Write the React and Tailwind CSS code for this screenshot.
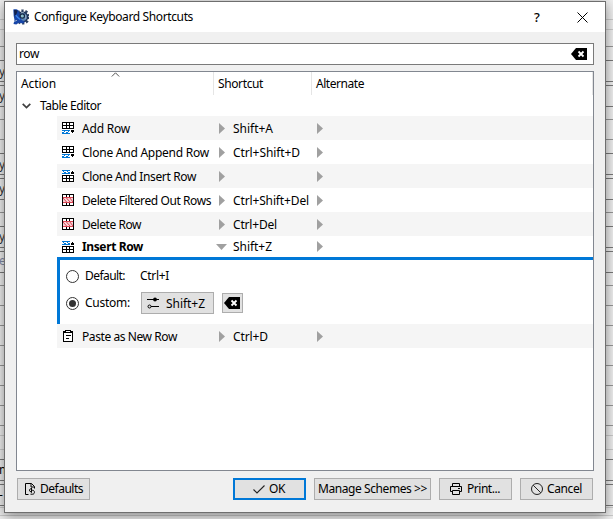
import { useLayoutEffect, useRef } from 'react';

// Text set to a given advance width, by spreading the difference over its letters.
function T({ w, children, className = '' }) {
  const ref = useRef(null);
  useLayoutEffect(() => {
    const el = ref.current;
    el.style.letterSpacing = '0px';
    const natural = el.getBoundingClientRect().width;
    el.style.letterSpacing = `${(w - natural) / children.length}px`;
  }, [w, children]);
  return (
    <span ref={ref} className={`inline-block shrink-0 whitespace-pre ${className}`}>
      {children}
    </span>
  );
}

const BACK_LINES = [
  [19, 0], [29, 0], [46, 1], [60, 2], [81, 2], [85, 2], [106, 2], [119, 1], [139, 1],
  [153, 2], [174, 2], [178, 2], [199, 2], [212, 1], [226, 2], [247, 2], [251, 2], [272, 2],
  [285, 1], [305, 1], [325, 1], [345, 1], [365, 1], [385, 1], [405, 1], [425, 1], [435, 0],
  [449, 0], [459, 2], [480, 2], [484, 2], [505, 2], [507, 0], [515, 0],
];
const LINE_COLORS = ['bg-[#cccccc]', 'bg-[#989898]', 'bg-[#7a7a7a]'];
const BACK_TEXT = [
  [64, 'y', 'text-[#333]'], [88, 'y(', 'text-[#333]'], [157, 'y', 'text-[#333]'], [181, 'y', 'text-[#333]'],
  [229, 'y(', 'text-[#333]'], [253, 'er', 'text-[#7f8aa5]'], [462, 'm', 'text-black'], [487, '-', 'text-black'],
];

function Backdrop() {
  return (
    <div className="absolute inset-0 bg-[#f0f0f0]">
      {BACK_LINES.map(([y, tone]) => (
        <div key={y} className={`absolute inset-x-0 h-px ${LINE_COLORS[tone]}`} style={{ top: y }} />
      ))}
      {BACK_TEXT.map(([y, text, color]) => (
        <span key={y} className={`absolute -left-px text-[12px] leading-4 ${color}`} style={{ top: y }}>
          {text}
        </span>
      ))}
    </div>
  );
}

function AppIcon() {
  return (
    <svg className="h-4 w-4 shrink-0" viewBox="0 0 16 16">
      <circle cx="9.6" cy="8" r="6.3" fill="none" stroke="#2c405f" strokeWidth="2.600" strokeDasharray="2.200 1.760" />
      <circle cx="9.6" cy="8" r="4.900" fill="#5c86b4" stroke="#1e3358" strokeWidth="1.600" />
      <path d="M.3.5c2-.7 4-.3 5.200.9L7 5.500l1.500 5.500 3.500 1.800-2 1.600-4.200-.6-2.500 1.700L.5 15l1-4-.8-4z" fill="#1746a8" />
      <path d="M1 1.200c1.500-.6 2.700-.3 3.600.6L3.500 5 1.600 7.500z" fill="#14224a" />
      <path d="M2.800 6.200c1.200 2 2.500 3 4.500 4.300" stroke="#3d85ea" strokeWidth="1.300" fill="none" />
      <circle cx="9.300" cy="7" r="2.200" fill="#8cc0cd" stroke="#152744" strokeWidth="1.200" />
      <path d="M1 12.500l3-1.200M8 3.700l3-.5M12.800 6v4" stroke="#a3b8cc" strokeWidth=".9" />
    </svg>
  );
}

function AddIcon() {
  return (
    <svg className="h-3 w-3 shrink-0" viewBox="0 0 12 12" shapeRendering="crispEdges">
      <path d="M0 0h12v12H0z" fill="#fff" />
      <path d="M0 0h12v1H0zM0 3h12v1H0zM0 6h12v1H0zM0 0h1v7H0zM4 0h1v7H4zM7 0h1v7H7zM11 0h1v7h-1z" fill="#000" />
      <path d="M0 8h8v1H0zM2 9h1v1H2zM6 9h1v1H6zM0 10h2v1H0zM4 10h2v1H4zM0 11h8v1H0z" fill="#0078d7" />
      <path d="M9 8h3v2H9zM10 10h1v1h-1z" fill="#000" />
    </svg>
  );
}

function InsertIcon() {
  return (
    <svg className="h-3 w-3 shrink-0" viewBox="0 0 12 12" shapeRendering="crispEdges">
      <path d="M0 0h12v12H0z" fill="#fff" />
      <path d="M0 0h8v1H0zM1 1h1v1H1zM5 1h1v1H5zM2 2h2v1H2zM6 2h2v1H6zM0 3h8v1H0z" fill="#0078d7" />
      <path d="M10 1h1v1h-1zM9 2h3v2H9zM0 5h12v1H0zM0 8h12v1H0zM0 11h12v1H0zM0 5h1v7H0zM4 5h1v7H4zM7 5h1v7H7zM11 5h1v7h-1z" fill="#000" />
    </svg>
  );
}

function DeleteIcon() {
  return (
    <svg className="h-3 w-3 shrink-0" viewBox="0 0 12 12">
      <g shapeRendering="crispEdges">
        <path d="M0 0h12v12H0z" fill="#fff" />
        <path d="M0 0h12v1H0zM0 11h12v1H0zM0 0h1v12H0zM11 0h1v12h-1zM4 0h1v12H4zM7 0h1v12H7z" fill="#000" />
        <path d="M1 3h10v6H1z" fill="#f7d3d6" />
        <path d="M1 3h10v1H1zM1 8h10v1H1z" fill="#da4453" />
      </g>
      <path d="M1 4l4 4.500M4 3.500l4.500 5M7.500 3.500l3.500 4.500" stroke="#da4453" strokeWidth="1" />
    </svg>
  );
}

function PasteIcon() {
  return (
    <svg className="h-3 w-3 shrink-0" viewBox="0 0 12 12" shapeRendering="crispEdges">
      <path d="M1 1h10v11H1z" fill="#000" />
      <path d="M2 3h8v8H2z" fill="#fff" />
      <path d="M3 0h6v3H3z" fill="#000" />
      <path d="M4 1h4v1H4z" fill="#fff" />
      <path d="M4 5h5v1H4zM4 8h3v1H4z" fill="#000" />
    </svg>
  );
}

function ClearIcon() {
  return (
    <svg className="h-3 w-4 shrink-0" viewBox="0 0 16 12">
      <path d="M5 0h11v12H5L0 6z" fill="#000" />
      <path d="M7.500 3.500l5 5M12.500 3.500l-5 5" stroke="#fff" strokeWidth="1.800" />
    </svg>
  );
}

function Arrow() {
  return (
    <svg className="h-[11px] w-[6px] shrink-0" viewBox="0 0 6 11">
      <path d="M0 0l6 5.500L0 11z" fill="#a0a0a0" />
    </svg>
  );
}

function ArrowDown() {
  return (
    <svg className="h-[6px] w-[11px] shrink-0" viewBox="0 0 11 6">
      <path d="M0 0h11L5.500 6z" fill="#a0a0a0" />
    </svg>
  );
}

function Row({ icon: Icon, name, w, shortcut, sw, striped, open }) {
  const drop = open ? '' : 'pt-[2px]';
  return (
    <div className={`ml-10 flex items-center ${open ? 'h-[21px]' : 'h-6'} ${striped ? 'bg-[#f5f5f5]' : 'bg-white'}`}>
      <div className="flex w-[156px] shrink-0 items-center gap-2 pl-[5px]">
        <Icon />
        <T w={w} className={open ? 'font-bold' : drop}>{name}</T>
      </div>
      <div className={`flex w-[98px] shrink-0 items-center ${open ? 'gap-[6px] pl-[3px]' : 'gap-2 pl-[6px]'}`}>
        {open ? <ArrowDown /> : <Arrow />}
        {shortcut && <T w={sw} className={drop}>{shortcut}</T>}
      </div>
      <div className="flex items-center pl-[6px]"><Arrow /></div>
    </div>
  );
}

function Radio({ checked }) {
  return (
    <span className="flex h-[13px] w-[13px] shrink-0 items-center justify-center rounded-full border border-[#333] bg-white">
      {checked && <span className="h-[7px] w-[7px] rounded-full bg-[#333]" />}
    </span>
  );
}

function Button({ className = 'w-[73px]', children }) {
  return (
    <div className={`flex h-[22px] shrink-0 items-center border border-[#adadad] bg-[#e1e1e1] ${className}`}>
      {children}
    </div>
  );
}

function Tree() {
  return (
    <div className="mt-[6px] h-[400px] border border-[#828790] bg-white">
      <div className="flex h-[23px] items-center">
        <div className="relative h-full w-[197px] border-r border-[#e5e5e5] pl-1">
          <T w={35} className="mt-[3px]">Action</T>
          <svg className="absolute left-[94px] top-0 h-[5px] w-[9px]" viewBox="0 0 9 5">
            <path d="M.8 4.500L4.500.8l3.700 3.700" stroke="#555" fill="none" />
          </svg>
        </div>
        <div className="h-full w-[98px] border-r border-[#e5e5e5] pl-1"><T w={45} className="mt-[3px]">Shortcut</T></div>
        <div className="h-full flex-1 border-r border-[#e5e5e5] pl-1"><T w={48} className="mt-[3px]">Alternate</T></div>
      </div>
      <div className="flex h-[21px] items-center gap-[9px] pl-[5px]">
        <svg className="h-[6px] w-[9px]" viewBox="0 0 9 6">
          <path d="M.7.8l3.800 3.800L8.300.8" stroke="#404040" strokeWidth="1.700" fill="none" />
        </svg>
        <T w={61}>Table Editor</T>
      </div>
      <Row icon={AddIcon} name="Add Row" w={48} shortcut="Shift+A" sw={40} striped />
      <Row icon={AddIcon} name="Clone And Append Row" w={127} shortcut="Ctrl+Shift+D" sw={67} />
      <Row icon={InsertIcon} name="Clone And Insert Row" w={114} striped />
      <Row icon={DeleteIcon} name="Delete Filtered Out Rows" w={129} shortcut="Ctrl+Shift+Del" sw={76} />
      <Row icon={DeleteIcon} name="Delete Row" w={59} shortcut="Ctrl+Del" sw={44} striped />
      <Row icon={InsertIcon} name="Insert Row" w={61} shortcut="Shift+Z" sw={39} open />
      <div className="ml-10 h-[67px] border-l-[3px] border-t-[3px] border-[#0078d7] pl-[6px]">
        <div className="flex h-8 items-center">
          <Radio />
          <div className="ml-[6px] w-[55px]"><T w={40}>Default:</T></div>
          <T w={29}>Ctrl+I</T>
        </div>
        <div className="flex h-[22px] items-center">
          <Radio checked />
          <div className="ml-[6px] w-[56px]"><T w={45}>Custom:</T></div>
          <Button className="w-[73px] gap-[7px] pl-[5px]">
            <svg className="h-3 w-3" viewBox="0 0 12 12">
              <path d="M0 2.500h12M4 9.500h8" stroke="#000" />
              <circle cx="8" cy="2.500" r="1.900" fill="#000" />
              <circle cx="2.500" cy="9.500" r="1.500" fill="none" stroke="#000" />
            </svg>
            <T w={39} className="pt-[2px]">Shift+Z</T>
          </Button>
          <div className="ml-2 flex h-5 w-[21px] items-center border border-[#adadad] bg-[#e1e1e1] pl-px"><ClearIcon /></div>
        </div>
      </div>
      <Row icon={PasteIcon} name="Paste as New Row" w={95} shortcut="Ctrl+D" sw={35} striped />
    </div>
  );
}

function Footer() {
  return (
    <div className="mt-[7px] flex pl-px">
      <Button className="w-[73px] gap-[5px] pl-[7px]">
        <svg className="h-[12px] w-[10px]" viewBox="0 0 10 12">
          <path d="M3.500 11.500h-3V.5h6l3 3v2M6 .5V4h3.500" stroke="#000" fill="none" />
          <path d="M6.500 5L4 7.300l2.500 2.200zM6 7.300h1.700c2.300 0 2.300 3.900 0 3.900H5.500" stroke="#000" fill="none" />
        </svg>
        <T w={43}>Defaults</T>
      </Button>
      <div className="ml-[143px] flex h-[22px] w-[73px] items-center gap-1 border-2 border-[#0078d7] bg-[#e1e1e1] pl-[18px]">
        <svg className="h-[9px] w-3" viewBox="0 0 12 9">
          <path d="M.5 4.500l3.500 3.500L11.500.5" stroke="#222" strokeWidth="1.100" fill="none" />
        </svg>
        <T w={16}>OK</T>
      </div>
      <Button className="ml-2 w-[117px] pl-[3px]"><T w={109}>{'Manage Schemes >>'}</T></Button>
      <Button className="ml-2 w-[73px] gap-[5px] pl-[10px]">
        <svg className="h-3 w-3" viewBox="0 0 12 12">
          <path d="M2.500 3.500v-3h7v3M2.500 8.500h-2v-5h11v5h-2M2.500 7.500h7v4h-7zM8 5.500h2" stroke="#000" fill="none" />
        </svg>
        <T w={33}>Print...</T>
      </Button>
      <Button className="ml-2 w-[73px] gap-[4px] pl-[10px]">
        <svg className="h-3 w-3" viewBox="0 0 12 12">
          <path d="M6 .5a5.500 5.500 0 1 0 0 11a5.500 5.500 0 1 0 0-11M2.200 2.200l7.600 7.600" stroke="#222" fill="none" />
        </svg>
        <T w={35}>Cancel</T>
      </Button>
    </div>
  );
}

export default function App() {
  return (
    <div className="relative h-[519px] w-[613px] overflow-hidden font-['Noto_Sans','Open_Sans',sans-serif] text-[12px] leading-[18px] text-black">
      <Backdrop />
      <div className="absolute left-1 top-px h-[512px] w-[602px] border border-[#6e6e6e] bg-[#f0f0f0] shadow-[0_3px_12px_rgba(0,0,0,0.45)]">
        <div className="flex h-[30px] items-center bg-white pl-2">
          <AppIcon />
          <T w={159} className="ml-[5px]">Configure Keyboard Shortcuts</T>
          <span className="ml-[341px] w-[9px] text-[13px] font-medium">?</span>
          <svg className="ml-[34px] h-[11px] w-[11px]" viewBox="0 0 11 11">
            <path d="M.5.5l10 10M10.500.5l-10 10" stroke="#000" />
          </svg>
        </div>
        <div className="px-[11px] pt-[11px]">
          <div className="flex h-[22px] items-center justify-between border border-[#7a7a7a] bg-white pl-[2px] pr-[6px]">
            <T w={20}>row</T>
            <ClearIcon />
          </div>
          <Tree />
          <Footer />
        </div>
      </div>
    </div>
  );
}
